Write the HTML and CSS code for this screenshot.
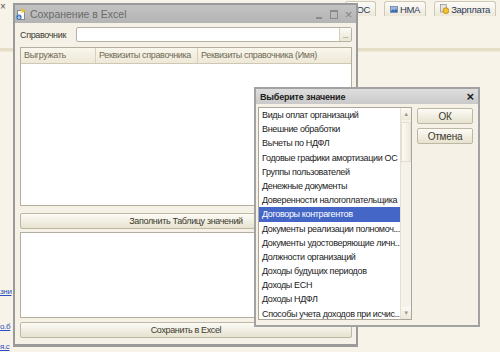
FILE: index.html
```html
<!DOCTYPE html>
<html lang="ru">
<head>
    <meta charset="UTF-8">
    <title>Сохранение в Excel</title>
    <link rel="stylesheet" href="styles.css">
</head>
<body>
    <div class="app">
        <div class="side">
            <span class="side-close">×</span>
            <a class="side-link link-1">зни</a>
            <a class="side-link link-2">о.б</a>
            <a class="side-link link-3">я.с</a>
        </div>
        <div class="tabs">
            <div class="tab tab-os">ОС</div>
            <div class="tab tab-nma">
                <svg width="11" height="9" viewBox="0 0 11 9">
                    <rect x="0.5" y="0.5" width="10" height="8" fill="#9fb7d8" stroke="#5b7aa8"/>
                    <path d="M1 7 L4 4 L6 6 L8 3 L10 6 L10 8 L1 8 Z" fill="#3f6db3"/>
                </svg>
                НМА
            </div>
            <div class="tab tab-zp">
                <svg width="11" height="12" viewBox="0 0 11 12">
                    <rect x="0.5" y="0.5" width="7" height="9" fill="#e6e6e6" stroke="#9a9a9a"/>
                    <circle cx="7" cy="8" r="3.5" fill="#f2c232" stroke="#c08a12"/>
                </svg>
                Зарплата
            </div>
        </div>
        <div class="band"></div>
    </div>

    <!-- Окно обработки -->
    <div class="window main-window">
        <div class="title-bar">
            <svg class="title-icon" width="10" height="12" viewBox="0 0 10 12">
                <rect x="1.5" y="2.5" width="7" height="9" fill="#fff" stroke="#8a8a8a"/>
                <path d="M7 0 L7.8 1.8 L9.8 2 L8.3 3.2 L8.8 5 L7 4 L5.2 5 L5.7 3.2 L4.2 2 L6.2 1.8 Z" fill="#f0c020"/>
                <circle cx="3" cy="9" r="2.6" fill="#2d6fc0"/>
                <path d="M3 7.5 V10.5 M1.8 9.4 L3 10.6 L4.2 9.4" stroke="#fff" stroke-width="0.9" fill="none"/>
            </svg>
            <span class="title-text">Сохранение в Excel</span>
            <div class="title-controls">
                <span class="ctl ctl-min"></span>
                <span class="ctl ctl-max"></span>
                <span class="ctl ctl-close">×</span>
            </div>
        </div>
        <div class="window-body">
            <div class="field-row">
                <label class="field-label">Справочник</label>
                <div class="field-input">
                    <span class="field-select">...</span>
                </div>
            </div>
            <div class="grid">
                <div class="grid-head">
                    <div class="col col-1">Выгружать</div>
                    <div class="col col-2">Реквизиты справочника</div>
                    <div class="col col-3">Реквизиты справочника (Имя)</div>
                </div>
            </div>
            <button class="wide-button fill-button">Заполнить Таблицу значений</button>
            <div class="text-box"></div>
            <button class="wide-button save-button">Сохранить в Excel</button>
        </div>
    </div>

    <!-- Выбор значения -->
    <div class="window dialog">
        <div class="dialog-title">
            <span>Выберите значение</span>
            <span class="dialog-close">×</span>
        </div>
        <div class="dialog-body">
            <div class="list">
                <div class="list-items">
                    <div class="item">Виды оплат организаций</div>
                    <div class="item">Внешние обработки</div>
                    <div class="item">Вычеты по НДФЛ</div>
                    <div class="item">Годовые графики амортизации ОС</div>
                    <div class="item">Группы пользователей</div>
                    <div class="item">Денежные документы</div>
                    <div class="item">Доверенности налогоплательщика</div>
                    <div class="item selected">Договоры контрагентов</div>
                    <div class="item">Документы реализации полномоч...</div>
                    <div class="item">Документы удостоверяющие личн...</div>
                    <div class="item">Должности организаций</div>
                    <div class="item">Доходы будущих периодов</div>
                    <div class="item">Доходы ЕСН</div>
                    <div class="item">Доходы НДФЛ</div>
                    <div class="item">Способы учета доходов при исчис...</div>
                </div>
                <div class="scrollbar">
                    <span class="scroll-btn">▲</span>
                    <span class="scroll-thumb"></span>
                    <span class="scroll-space"></span>
                    <span class="scroll-btn">▼</span>
                </div>
            </div>
            <div class="dialog-buttons">
                <button class="dlg-button">ОК</button>
                <button class="dlg-button">Отмена</button>
            </div>
        </div>
    </div>
</body>
</html>
```

FILE: styles.css
```css
body {
    margin: 0;
    width: 500px;
    height: 352px;
    overflow: hidden;
    position: relative;
    background-color: #f7f3e8;
    font-family: "Liberation Sans", Arial, sans-serif;
    font-size: 9px;
    letter-spacing: -0.35px;
    color: #2a2a22;
}
.app {
    height: 352px;
    position: relative;
}
.side {
    position: absolute;
    left: 0;
    top: 0;
    width: 13px;
    height: 352px;
    display: flex;
    flex-direction: column;
    overflow: hidden;
}
.side-close {
    font-size: 10px;
    color: #555;
    margin: 2px 0 0 0;
    line-height: 10px;
}
.side-link {
    color: #2d4fc0;
    text-decoration: underline;
    font-size: 8px;
    line-height: 10px;
    white-space: nowrap;
}
.link-1 { margin-top: 275px; }
.link-2 { margin-top: 25px; }
.link-3 { margin-top: 10px; }
.tabs {
    display: flex;
    gap: 8px;
    padding: 1px 0 0 345px;
    height: 16px;
}
.tab {
    height: 15px;
    box-sizing: border-box;
    border: 1px solid #cfc8b4;
    border-bottom: none;
    border-radius: 3px 3px 0 0;
    background: linear-gradient(#fdfcf8, #ece7d9);
    display: flex;
    align-items: center;
    gap: 2px;
    padding: 0 5px;
    color: #2c3a58;
    font-size: 9.5px;
}
.tab-os {
    width: 31px;
    justify-content: flex-end;
}
.tab-nma { width: 42px; }
.tab-zp { width: 62px; }
.band {
    margin-top: 31px;
    height: 3px;
    background-color: #e6ddc6;
    border-bottom: 1px solid #efe9da;
}

.window {
    position: absolute;
    box-sizing: border-box;
    background-color: #f5f1e6;
    display: flex;
    flex-direction: column;
}
.main-window {
    left: 13px;
    top: 3px;
    width: 345px;
    height: 344px;
    border: 2px solid #9a9a9a;
    border-bottom-width: 3px;
}
.title-bar {
    height: 18px;
    background: linear-gradient(#c3c3c3, #b4b4b4);
    display: flex;
    align-items: center;
    padding-left: 1px;
    gap: 4px;
    color: #6b6b6b;
    font-size: 10.5px;
    letter-spacing: 0;
}
.title-icon {
    flex: none;
}
.title-controls {
    margin-left: auto;
    display: flex;
    height: 18px;
}
.ctl {
    width: 15px;
    height: 18px;
    display: flex;
    align-items: center;
    justify-content: center;
    color: #858585;
    font-size: 13px;
}
.ctl-min::after {
    content: "";
    width: 6px;
    height: 2px;
    background-color: #8a8a8a;
    margin-top: 8px;
}
.ctl-max::after {
    content: "";
    width: 6px;
    height: 6px;
    border: 1px solid #8a8a8a;
    border-top-width: 2px;
}
.window-body {
    flex: 1;
    display: flex;
    flex-direction: column;
    padding: 4px 4px 0 5px;
}
.field-row {
    display: flex;
    align-items: center;
    height: 15px;
}
.field-label {
    width: 56px;
    color: #3a3a30;
}
.field-input {
    flex: 1;
    height: 15px;
    box-sizing: border-box;
    border: 1px solid #b5b1a3;
    border-radius: 2px;
    background-color: #fff;
    display: flex;
    justify-content: flex-end;
}
.field-select {
    width: 11px;
    border-left: 1px solid #d2cdbd;
    background: linear-gradient(#fbfaf4, #ebe6d6);
    color: #6a6440;
    font-size: 8px;
    line-height: 15px;
    text-align: center;
}
.grid {
    margin-top: 5px;
    height: 159px;
    box-sizing: border-box;
    border: 1px solid #b3ae9e;
    background-color: #fff;
}
.grid-head {
    display: flex;
    height: 15px;
    background: linear-gradient(#f9f6ec, #ede8d7);
    border-bottom: 1px solid #cdc7b3;
    color: #6e6a55;
}
.col {
    box-sizing: border-box;
    padding-left: 3px;
    line-height: 15px;
    border-right: 1px solid #d6d0bd;
    white-space: nowrap;
    overflow: hidden;
}
.col-1 { width: 75px; }
.col-2 { width: 102px; }
.col-3 {
    flex: 1;
    border-right: none;
}
.wide-button {
    height: 16px;
    box-sizing: border-box;
    border: 1px solid #bdb7a3;
    border-radius: 2px;
    background: linear-gradient(#fcfbf6, #e7e2d0);
    font-family: inherit;
    font-size: 9px;
    letter-spacing: -0.35px;
    color: #3c3a2e;
    padding: 0;
}
.fill-button {
    margin-top: 7px;
}
.text-box {
    margin-top: 3px;
    height: 86px;
    box-sizing: border-box;
    border: 1px solid #b3ae9e;
    background-color: #fff;
}
.save-button {
    margin-top: 4px;
}

.dialog {
    left: 254px;
    top: 87px;
    width: 226px;
    height: 240px;
    border: 2px solid #a2a2a2;
}
.dialog-title {
    height: 15px;
    background: linear-gradient(#dedede, #c9c9c9);
    display: flex;
    align-items: center;
    justify-content: space-between;
    padding: 0 4px 0 4px;
    font-weight: bold;
    font-size: 9px;
    letter-spacing: -0.2px;
    color: #1e1e1e;
}
.dialog-close {
    font-size: 13px;
}
.dialog-body {
    display: flex;
    gap: 5px;
    padding: 3px 0 0 2px;
}
.list {
    width: 154px;
    height: 213px;
    box-sizing: border-box;
    border: 1px solid #aaa597;
    background-color: #fff;
    display: flex;
    overflow: hidden;
}
.list-items {
    flex: 1;
    min-width: 0;
    overflow: hidden;
}
.item {
    height: 14.2px;
    line-height: 14.2px;
    padding-left: 3px;
    white-space: nowrap;
    overflow: hidden;
    color: #222;
}
.item.selected {
    background-color: #4466c6;
    color: #fff;
}
.scrollbar {
    flex: none;
    width: 10px;
    background-color: #f4f2ea;
    border-left: 1px solid #e4e0d2;
    display: flex;
    flex-direction: column;
}
.scroll-btn {
    height: 12px;
    font-size: 6px;
    line-height: 12px;
    text-align: center;
    color: #a09c8c;
    background: linear-gradient(#fbfaf5, #ece8da);
}
.scroll-thumb {
    height: 38px;
    margin-top: 2px;
    border: 1px solid #e2ded0;
    background: linear-gradient(90deg, #fbfaf5, #efebde);
}
.scroll-space {
    flex: 1;
}
.dialog-buttons {
    display: flex;
    flex-direction: column;
    gap: 4px;
    padding-top: 1px;
}
.dlg-button {
    width: 56px;
    height: 16px;
    box-sizing: border-box;
    border: 1px solid #bdb7a3;
    border-radius: 2px;
    background: linear-gradient(#fcfbf6, #e7e2d0);
    font-family: inherit;
    font-size: 10px;
    letter-spacing: -0.2px;
    color: #3c3a2e;
    padding: 0;
}
```
